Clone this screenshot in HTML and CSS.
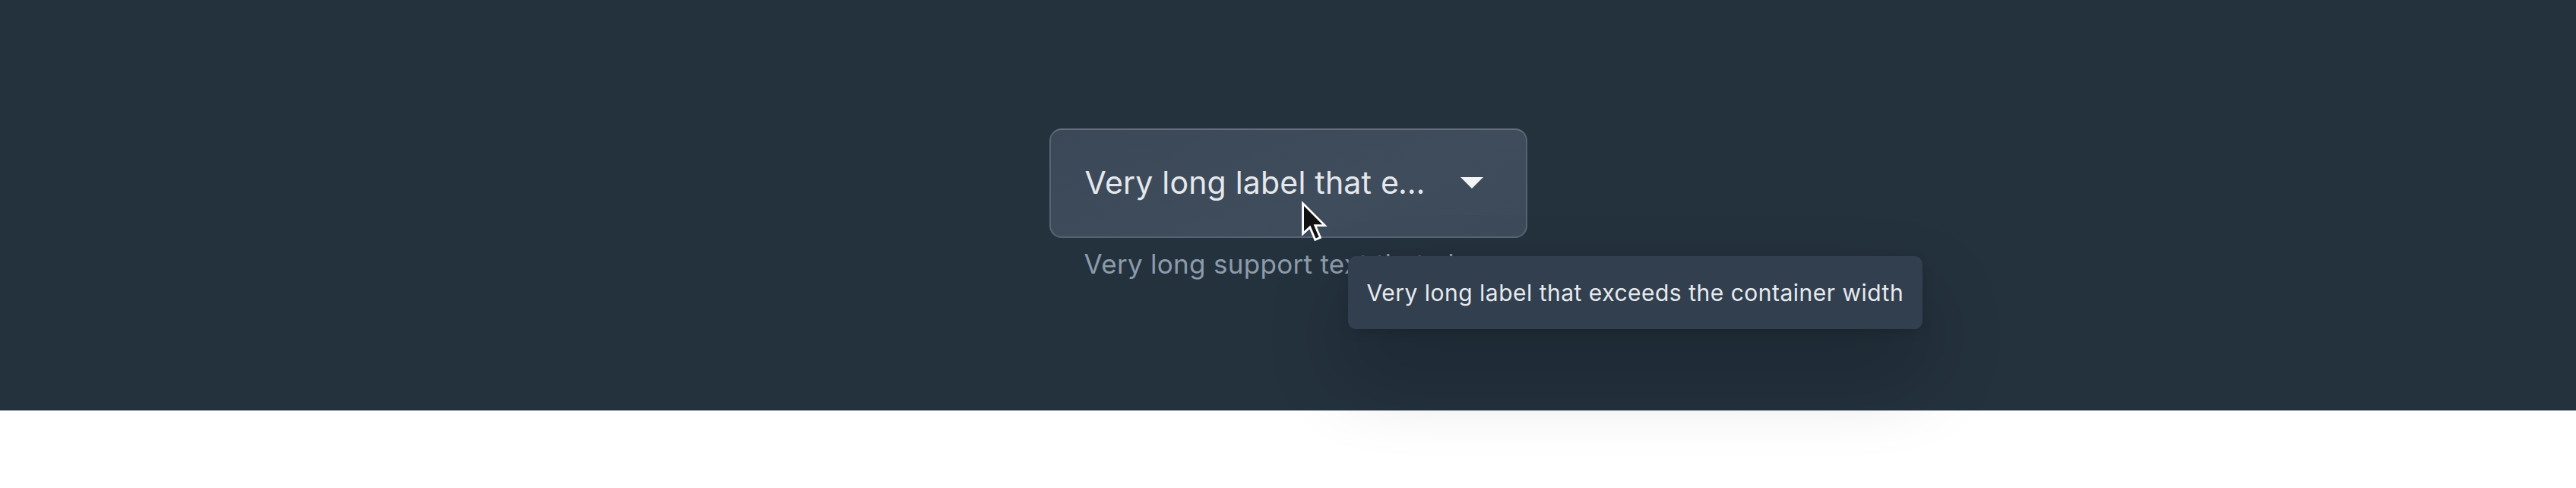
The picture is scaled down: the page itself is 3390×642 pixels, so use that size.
FILE: index.html
```html
<!DOCTYPE html>
<html lang="en">
<head>
    <meta charset="UTF-8">
    <meta name="viewport" content="width=device-width, initial-scale=1.0">
    <title>Select with tooltip</title>
    <link rel="stylesheet" href="styles.css">
</head>
<body>
    <div class="stage">
        <div class="field">
            <div class="select">
                <span class="select-label">Very long label that exceeds the container width</span>
                <svg class="caret" width="30" height="15" viewBox="0 0 30 15">
                    <path d="M0 0 L30 0 L15 15 Z" fill="currentColor"/>
                </svg>
            </div>
            <div class="support">Very long support text that also exceeds the width</div>

            <div class="tooltip">Very long label that exceeds the container width</div>

            <svg class="cursor" width="36" height="56" viewBox="0 0 14 21">
                <path d="M1 1 L1 16.5 L4.6 13.2 L7.3 19.6 L9.9 18.5 L7.3 12.3 L12.2 12.3 Z"
                      fill="#111" stroke="#fff" stroke-width="1.1" stroke-linejoin="miter"/>
            </svg>
        </div>
    </div>
</body>
</html>
```

FILE: styles.css
```css
html {
    background-color: #fff;
}
body {
    margin: 0;
    min-height: 642px;
    font-family: Inter, Lato, sans-serif;
}
.stage {
    height: 540px;
    background-color: #24323e;
    display: flex;
    align-items: center;
    justify-content: center;
}
.field {
    position: relative;
    width: 629px;
    display: flex;
    flex-direction: column;
    gap: 10px;
}
.select {
    box-sizing: border-box;
    height: 144px;
    display: flex;
    align-items: center;
    gap: 36px;
    padding: 0 56px 0 45px;
    border: 2px solid rgba(255,255,255,0.14);
    border-top-color: rgba(255,255,255,0.2);
    border-radius: 16px;
    background: linear-gradient(160deg, #3b4857 0%, #3f4c5c 60%, #3d4a59 100%);
}
.select-label {
    flex: 1;
    min-width: 0;
    overflow: hidden;
    white-space: nowrap;
    text-overflow: ellipsis;
    font-size: 41px;
    line-height: 1.2;
    letter-spacing: 0.2px;
    color: #e4e8ec;
}
.caret {
    flex-shrink: 0;
    color: #f2f4f6;
}
.support {
    padding-left: 46px;
    font-size: 35px;
    line-height: 49px;
    letter-spacing: 0.3px;
    color: #8e9bab;
    white-space: nowrap;
    overflow: hidden;
}
.tooltip {
    position: absolute;
    z-index: 2;
    left: 393px;
    top: 168px;
    padding: 24px 25px;
    font-size: 30px;
    line-height: 48px;
    letter-spacing: 0.5px;
    white-space: nowrap;
    color: #e6eaee;
    background-color: #323f4e;
    border-radius: 10px;
    box-shadow: 0 56px 110px rgba(0,0,0,0.24), 0 4px 14px rgba(0,0,0,0.15);
}
.cursor {
    position: absolute;
    z-index: 3;
    left: 331px;
    top: 95px;
}
```
